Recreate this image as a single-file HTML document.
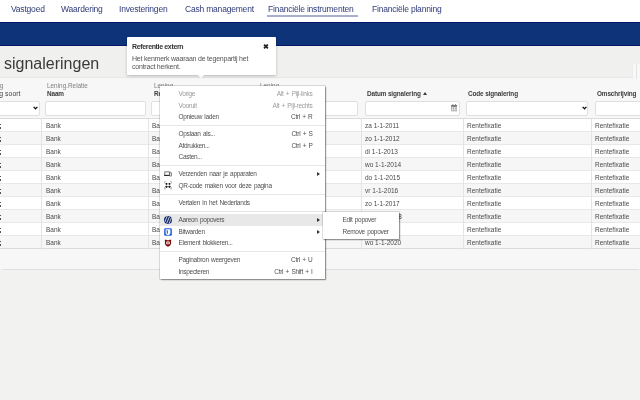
<!DOCTYPE html>
<html><head><meta charset="utf-8">
<style>
*{margin:0;padding:0;box-sizing:border-box}
html,body{width:640px;height:400px;overflow:hidden;background:#f2f2f1;font-family:"Liberation Sans",sans-serif}
.a,.l1,.l2,.cell,.mi,#pop div{will-change:transform}
.a{position:absolute;white-space:nowrap}
#nav{position:absolute;left:0;top:0;width:640px;height:22px;background:#fff}
#nav .a{top:4.4px;font-size:8.5px;letter-spacing:-0.2px;color:#2f3a78}
#bar{position:absolute;left:0;top:22px;width:640px;height:23.8px;background:#0e3378;box-shadow:inset 0 1px 0 #06146a,inset 0 -1px 0 #07166a}
#titlearea{position:absolute;left:0;top:46px;width:640px;height:32px;background:#f0f0ef;border-bottom:1px solid #e8e8e7}
#title{left:3.5px;top:55px;font-size:16px;color:#3a3a3a}
#hdr{position:absolute;left:0;top:78px;width:640px;height:190.8px;background:#f7f7f7;box-shadow:0 0.6px 0.8px rgba(0,0,0,.08)}
.l1{position:absolute;font-size:6.4px;color:#808080;top:82.2px;white-space:nowrap}
.l2{position:absolute;font-size:6.4px;color:#3a3a3a;font-weight:bold;top:90.3px;white-space:nowrap;letter-spacing:-0.12px}
.inp{position:absolute;top:101px;height:15px;background:#fff;border:1px solid #e0e0e0;border-radius:2px}
#tbl{position:absolute;left:0;top:118px;width:640px;height:131px;border-top:1px solid #dcdcdc;border-bottom:1px solid #dcdcdc}
.row{position:absolute;left:0;width:640px;height:13px;border-bottom:1px solid #e8e8e8}
.o{background:#fff}.e{background:#f6f6f6}
.cell{position:absolute;font-size:6.5px;color:#4a4a4a;white-space:nowrap}
.vd{position:absolute;top:0;width:1px;height:130px;background:#e4e4e4}
/* menu */
#menu{position:absolute;left:160px;top:86px;width:165px;height:192.5px;background:#fff;box-shadow:0 0 0 0.6px rgba(0,0,0,.22),0.8px 0.8px 1.2px rgba(0,0,0,.4);padding-top:2px}
.mi{position:relative;height:11.5px;font-size:6.5px;letter-spacing:-0.3px;word-spacing:0.8px;color:#505050;white-space:nowrap}
.mi .t{position:absolute;left:18.5px;top:2.2px}
.mi .k{position:absolute;right:12.5px;top:2.2px}
.mi.dis{color:#9a9a9a}
.mi.hl{background:#e8e8e8}
.sep{height:5.7px;position:relative}
.sep:after{content:"";position:absolute;left:0;right:0;top:2.4px;height:1px;background:#e6e6e6}
.arr{position:absolute;right:5px;top:3.5px;width:0;height:0;border-left:3px solid #333;border-top:2px solid transparent;border-bottom:2px solid transparent}
#sub{position:absolute;left:322.5px;top:212.3px;width:76px;height:26.3px;background:#fff;box-shadow:0 0 0 0.6px rgba(0,0,0,.22),0.8px 0.8px 1.2px rgba(0,0,0,.4);padding-top:2px}
#pop{position:absolute;left:126.5px;top:36.5px;width:149.5px;height:38.5px;background:#fff;box-shadow:0 1px 3px rgba(0,0,0,.25);border-radius:1px}
.dot{position:absolute;left:0;width:1.3px;height:1.6px;background:#555}
#pop .pt{position:absolute;left:5.5px;top:6px;font-size:7px;font-weight:bold;color:#333;letter-spacing:-0.35px}
#pop .pb{position:absolute;left:5.5px;top:18px;font-size:7px;line-height:8.4px;color:#555;white-space:nowrap;letter-spacing:-0.22px}
#pop .x{position:absolute;left:136px;top:6px;font-size:7px;color:#222;font-weight:bold}
#pop .tip{position:absolute;left:71px;top:38.5px;width:0;height:0;border-left:3px solid transparent;border-right:3px solid transparent;border-top:3px solid #fff}
.ic{position:absolute;left:4px;top:1.7px;width:8px;height:8px}
</style></head><body>
<div id="nav">
  <div class="a" style="left:11px">Vastgoed</div>
  <div class="a" style="left:61px">Waardering</div>
  <div class="a" style="left:119px">Investeringen</div>
  <div class="a" style="left:185px">Cash management</div>
  <div class="a" style="left:268px">Financiële instrumenten</div>
  <div class="a" style="left:372px">Financiële planning</div>
  <div style="position:absolute;left:267px;top:15px;width:91px;height:1.5px;background:#a9afc9"></div>
</div>
<div id="bar"></div>
<div id="titlearea"></div>
<div class="a" id="title">signaleringen</div>
<div id="hdr"></div>
<div style="position:absolute;left:632px;top:64px;width:8px;height:15px;background:#f8f8f8;border-left:1px solid #ededed"></div><div style="position:absolute;left:636px;top:64px;width:1px;height:15px;background:#e3e3e3"></div>

<div class="l1" style="right:637px">Lening</div>
<div class="l2" style="right:619px;font-weight:normal;color:#444;font-size:6.8px;letter-spacing:0.1px;top:90px">Lening soort</div>
<div class="l1" style="left:47px">Lening.Relatie</div>
<div class="l2" style="left:47px">Naam</div>
<div class="l1" style="left:153.5px">Lening</div>
<div class="l2" style="left:153.5px">Relatie</div>
<div class="l1" style="left:260px">Lening</div>
<div class="l2" style="left:260px">Looptijd</div>
<div class="l2" style="left:367px">Datum signalering</div>
<div style="position:absolute;left:422.8px;top:92.3px;width:0;height:0;border-left:2.9px solid transparent;border-right:2.9px solid transparent;border-bottom:3px solid #3a3a3a"></div>
<div class="l2" style="left:468px">Code signalering</div>
<div class="l2" style="left:597px">Omschrijving</div>

<div class="inp" style="left:-5px;width:44.5px"></div>
<div class="inp" style="left:44.5px;width:101px"></div>
<div class="inp" style="left:151px;width:107px"></div>
<div class="inp" style="left:258px;width:100px"></div>
<div class="inp" style="left:364.5px;width:95.5px"></div>
<div class="inp" style="left:466px;width:122px"></div>
<div class="inp" style="left:594.5px;width:60px"></div>

<svg style="position:absolute;left:32.5px;top:106px" width="5" height="4" viewBox="0 0 10 8"><path d="M1.2 1.8L5 5.6L8.8 1.8" fill="none" stroke="#111" stroke-width="2.6"/></svg>
<svg style="position:absolute;left:581.5px;top:106px" width="5" height="4" viewBox="0 0 10 8"><path d="M1.2 1.8L5 5.6L8.8 1.8" fill="none" stroke="#111" stroke-width="2.6"/></svg>
<svg style="position:absolute;left:450.5px;top:104.2px" width="6.5" height="7.5" viewBox="0 0 13 15"><rect x="0.5" y="2" width="12" height="12.5" fill="#999"/><rect x="0.5" y="2" width="12" height="3" fill="#777"/><rect x="3" y="0" width="1.6" height="3.5" fill="#777"/><rect x="8.4" y="0" width="1.6" height="3.5" fill="#777"/><g fill="#fff"><rect x="2" y="6.5" width="2.5" height="2.5"/><rect x="5.3" y="6.5" width="2.5" height="2.5"/><rect x="8.6" y="6.5" width="2.5" height="2.5"/><rect x="2" y="10.3" width="2.5" height="2.5"/><rect x="5.3" y="10.3" width="2.5" height="2.5"/><rect x="8.6" y="10.3" width="2.5" height="2.5"/></g></svg>
<div id="tbl">
  <div class="row o" style="top:0"></div>
  <div class="row e" style="top:13px"></div>
  <div class="row o" style="top:26px"></div>
  <div class="row e" style="top:39px"></div>
  <div class="row o" style="top:52px"></div>
  <div class="row e" style="top:65px"></div>
  <div class="row o" style="top:78px"></div>
  <div class="row e" style="top:91px"></div>
  <div class="row o" style="top:104px"></div>
  <div class="row e" style="top:117px;border-bottom-color:#dadada"></div>
  <div class="vd" style="left:41px"></div>
  <div class="vd" style="left:148px"></div>
  <div class="vd" style="left:255px"></div>
  <div class="vd" style="left:361px"></div>
  <div class="vd" style="left:462.5px"></div>
  <div class="vd" style="left:591px"></div>
</div>
<div id="cells">
<i class="dot" style="top:123.8px"></i><i class="dot" style="top:127.2px"></i>
<div class="cell" style="left:46px;top:122px">Bank</div>
<div class="cell" style="left:152px;top:122px">Bank</div>
<div class="cell" style="left:365px;top:122px">za 1-1-2011</div>
<div class="cell" style="left:466.5px;top:122px">Rentefixatie</div>
<div class="cell" style="left:595px;top:122px">Rentefixatie</div>
<i class="dot" style="top:136.8px"></i><i class="dot" style="top:140.2px"></i>
<div class="cell" style="left:46px;top:135px">Bank</div>
<div class="cell" style="left:152px;top:135px">Bank</div>
<div class="cell" style="left:365px;top:135px">zo 1-1-2012</div>
<div class="cell" style="left:466.5px;top:135px">Rentefixatie</div>
<div class="cell" style="left:595px;top:135px">Rentefixatie</div>
<i class="dot" style="top:149.8px"></i><i class="dot" style="top:153.2px"></i>
<div class="cell" style="left:46px;top:148px">Bank</div>
<div class="cell" style="left:152px;top:148px">Bank</div>
<div class="cell" style="left:365px;top:148px">di 1-1-2013</div>
<div class="cell" style="left:466.5px;top:148px">Rentefixatie</div>
<div class="cell" style="left:595px;top:148px">Rentefixatie</div>
<i class="dot" style="top:162.8px"></i><i class="dot" style="top:166.2px"></i>
<div class="cell" style="left:46px;top:161px">Bank</div>
<div class="cell" style="left:152px;top:161px">Bank</div>
<div class="cell" style="left:365px;top:161px">wo 1-1-2014</div>
<div class="cell" style="left:466.5px;top:161px">Rentefixatie</div>
<div class="cell" style="left:595px;top:161px">Rentefixatie</div>
<i class="dot" style="top:175.8px"></i><i class="dot" style="top:179.2px"></i>
<div class="cell" style="left:46px;top:174px">Bank</div>
<div class="cell" style="left:152px;top:174px">Bank</div>
<div class="cell" style="left:365px;top:174px">do 1-1-2015</div>
<div class="cell" style="left:466.5px;top:174px">Rentefixatie</div>
<div class="cell" style="left:595px;top:174px">Rentefixatie</div>
<i class="dot" style="top:188.8px"></i><i class="dot" style="top:192.2px"></i>
<div class="cell" style="left:46px;top:187px">Bank</div>
<div class="cell" style="left:152px;top:187px">Bank</div>
<div class="cell" style="left:365px;top:187px">vr 1-1-2016</div>
<div class="cell" style="left:466.5px;top:187px">Rentefixatie</div>
<div class="cell" style="left:595px;top:187px">Rentefixatie</div>
<i class="dot" style="top:201.8px"></i><i class="dot" style="top:205.2px"></i>
<div class="cell" style="left:46px;top:200px">Bank</div>
<div class="cell" style="left:152px;top:200px">Bank</div>
<div class="cell" style="left:365px;top:200px">zo 1-1-2017</div>
<div class="cell" style="left:466.5px;top:200px">Rentefixatie</div>
<div class="cell" style="left:595px;top:200px">Rentefixatie</div>
<i class="dot" style="top:214.8px"></i><i class="dot" style="top:218.2px"></i>
<div class="cell" style="left:46px;top:213px">Bank</div>
<div class="cell" style="left:152px;top:213px">Bank</div>
<div class="cell" style="left:365px;top:213px">ma 1-1-2018</div>
<div class="cell" style="left:466.5px;top:213px">Rentefixatie</div>
<div class="cell" style="left:595px;top:213px">Rentefixatie</div>
<i class="dot" style="top:227.8px"></i><i class="dot" style="top:231.2px"></i>
<div class="cell" style="left:46px;top:226px">Bank</div>
<div class="cell" style="left:152px;top:226px">Bank</div>
<div class="cell" style="left:365px;top:226px">di 1-1-2019</div>
<div class="cell" style="left:466.5px;top:226px">Rentefixatie</div>
<div class="cell" style="left:595px;top:226px">Rentefixatie</div>
<i class="dot" style="top:240.8px"></i><i class="dot" style="top:244.2px"></i>
<div class="cell" style="left:46px;top:239px">Bank</div>
<div class="cell" style="left:152px;top:239px">Bank</div>
<div class="cell" style="left:365px;top:239px">wo 1-1-2020</div>
<div class="cell" style="left:466.5px;top:239px">Rentefixatie</div>
<div class="cell" style="left:595px;top:239px">Rentefixatie</div>
</div>

<div id="pop">
  <div class="pt">Referentie extern</div>
  <div class="x">&#10006;</div>
  <div class="pb">Het kenmerk waaraan de tegenpartij het<br>contract herkent.</div>
  <div class="tip"></div>
</div>
<div id="menu">
  <div class="mi dis"><span class="t">Vorige</span><span class="k">Alt + Pijl-links</span></div>
  <div class="mi dis"><span class="t">Vooruit</span><span class="k">Alt + Pijl-rechts</span></div>
  <div class="mi"><span class="t">Opnieuw laden</span><span class="k">Ctrl + R</span></div>
  <div class="sep"></div>
  <div class="mi"><span class="t">Opslaan als...</span><span class="k">Ctrl + S</span></div>
  <div class="mi"><span class="t">Afdrukken...</span><span class="k">Ctrl + P</span></div>
  <div class="mi"><span class="t">Casten...</span></div>
  <div class="sep"></div>
  <div class="mi"><svg class="ic" viewBox="0 0 16 16"><rect x="1.6" y="3.8" width="10" height="6.4" fill="none" stroke="#333" stroke-width="1.3"/><rect x="0" y="10.2" width="12.5" height="1.8" fill="#222"/><rect x="11.2" y="5.6" width="4" height="6.4" rx="0.5" fill="#fff" stroke="#333" stroke-width="1.3"/></svg><span class="t">Verzenden naar je apparaten</span><i class="arr"></i></div>
  <div class="mi"><svg class="ic" viewBox="0 0 16 16" style="top:1.2px;height:8.5px"><path d="M1 4.5V1h3.5M11.5 1H15v3.5M15 11.5V15h-3.5M4.5 15H1v-3.5" fill="none" stroke="#888" stroke-width="1.1"/><rect x="3.2" y="3.4" width="3.6" height="3.6" rx="0.8" fill="#111"/><rect x="9.2" y="3.4" width="3.6" height="3.6" rx="0.8" fill="#111"/><rect x="3.2" y="9.2" width="3.6" height="3.6" rx="0.8" fill="#111"/><rect x="9.2" y="9.2" width="3.6" height="3.6" rx="0.8" fill="#111"/></svg><span class="t">QR-code maken voor deze pagina</span></div>
  <div class="sep"></div>
  <div class="mi"><span class="t">Vertalen in het Nederlands</span></div>
  <div class="sep"></div>
  <div class="mi hl"><svg class="ic" viewBox="0 0 16 16"><circle cx="8" cy="8" r="8" fill="#14286e"/><path d="M1.5 12.4L6.5 0.2M5.1 15.3L11 1M9.9 15.7L14.7 3.9" stroke="#fff" stroke-width="1.5"/></svg><span class="t">Aareon popovers</span><i class="arr"></i></div>
  <div class="mi"><svg class="ic" viewBox="0 0 16 16"><rect x="0.3" y="0.3" width="15.4" height="15.4" rx="2.5" fill="#1b5ee0"/><path d="M3.2 2.6h9.6v6.8c0 2.8-2.8 4.4-4.8 5.3C6 13.8 3.2 12.2 3.2 9.4z" fill="#fff"/><path d="M5.3 4.4h2.4v7.9C6.3 11.5 5.3 10.5 5.3 9.2z" fill="#1b5ee0"/></svg><span class="t">Bitwarden</span><i class="arr"></i></div>
  <div class="mi"><svg class="ic" viewBox="0 0 16 16"><path d="M1.8 1.5h3l1.5 1h3.4l1.5-1h3v7.2c0 3.6-3.4 5.8-6.2 6.8C5.2 14.5 1.8 12.3 1.8 8.7z" fill="#7a0b0b"/><rect x="4.5" y="5.2" width="7" height="5.2" rx="1" fill="#fff"/><circle cx="8" cy="7.8" r="1.5" fill="#7a0b0b"/></svg><span class="t">Element blokkeren...</span></div>
  <div class="sep"></div>
  <div class="mi"><span class="t">Paginabron weergeven</span><span class="k">Ctrl + U</span></div>
  <div class="mi"><span class="t">Inspecteren</span><span class="k">Ctrl + Shift + I</span></div>
</div>
<div id="sub">
  <div class="mi"><span class="t" style="left:19.5px">Edit popover</span></div>
  <div class="mi"><span class="t" style="left:19.5px">Remove popover</span></div>
</div>
</body></html>
